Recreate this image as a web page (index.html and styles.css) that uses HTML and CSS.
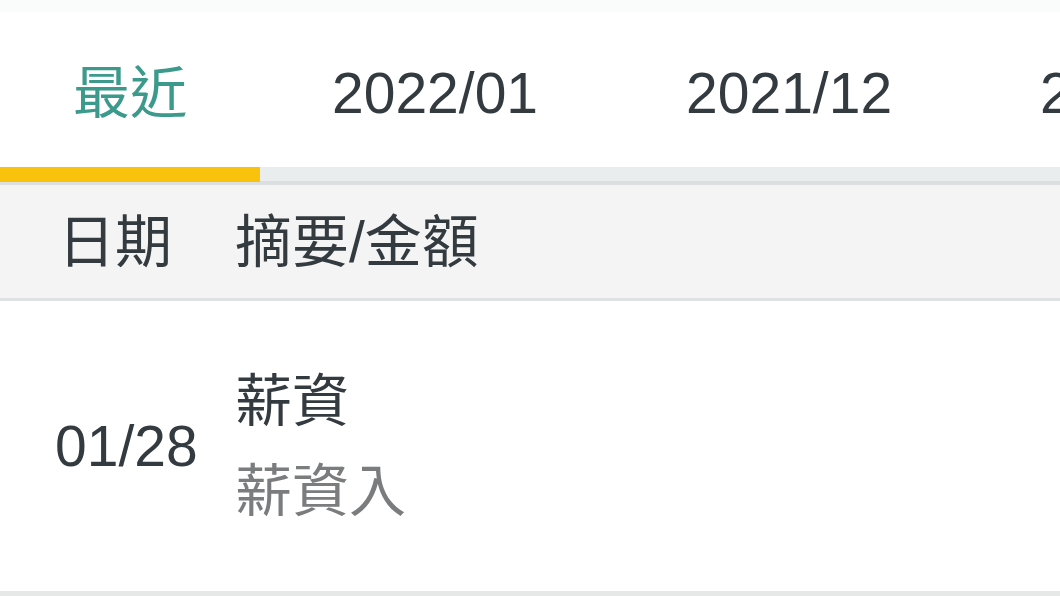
FILE: index.html
```html
<!DOCTYPE html>
<html lang="zh-Hant">
<head>
<meta charset="utf-8">
<title>交易明細</title>
<link rel="stylesheet" href="styles.css">
</head>
<body>
<div class="page">
  <div class="topband"></div>
  <nav class="tabs">
    <div class="tab active">最近</div>
    <div class="tab">2022/01</div>
    <div class="tab">2021/12</div>
    <div class="tab">2021/11</div>
  </nav>
  <div class="track">
    <div class="indicator"></div>
  </div>
  <div class="head grid">
    <div class="c1 hc1">日期</div>
    <div class="c2">摘要/金額</div>
  </div>
  <div class="row grid">
    <div class="c1 date">01/28</div>
    <div class="c2 desc">
      <div class="title">薪資</div>
      <div class="sub">薪資入</div>
    </div>
  </div>
</div>
</body>
</html>
```

FILE: styles.css
```css
html, body {
  margin: 0;
  padding: 0;
  background: #ffffff;
}
body {
  font-family: "Liberation Sans", "Noto Sans CJK TC", sans-serif;
  color: #343b40;
  width: 1060px;
  height: 596px;
  overflow: hidden;
}
.page {
  display: flex;
  flex-direction: column;
}
.topband {
  height: 12px;
  background: #fafcfc;
}
.tabs {
  display: flex;
  height: 155px;
  white-space: nowrap;
  overflow: hidden;
}
.tab {
  flex: none;
  display: flex;
  align-items: center;
  padding: 7px 74px 0 74px;
  font-size: 57px;
  line-height: 1.2;
  color: #343b40;
}
.tab.active {
  color: #3b9a8b;
  padding-left: 73px;
  padding-right: 71px;
}
.track {
  height: 14px;
  background: #eaeded;
  border-bottom: 4px solid #dcdfe0;
  display: flex;
}
.indicator {
  width: 260px;
  height: 15px;
  background: #f8c20d;
}
.grid {
  display: grid;
  grid-template-columns: 235px 1fr;
  align-items: center;
}
.head {
  height: 111px;
  padding-top: 2px;
  background: #f4f4f4;
  border-bottom: 3px solid #dfe2e2;
  font-size: 57px;
  line-height: 1.2;
}
.hc1 {
  padding-left: 58px;
}
.row {
  height: 295px;
  padding-top: 0;
  box-sizing: border-box;
  border-bottom: 5px solid #e6e8e8;
}
.date {
  padding-left: 55px;
  font-size: 57px;
  line-height: 1.2;
}
.desc {
  display: flex;
  flex-direction: column;
  font-size: 57px;
  line-height: 90px;
}
.title {
  color: #343b40;
}
.sub {
  color: #7a7c7e;
}
```
